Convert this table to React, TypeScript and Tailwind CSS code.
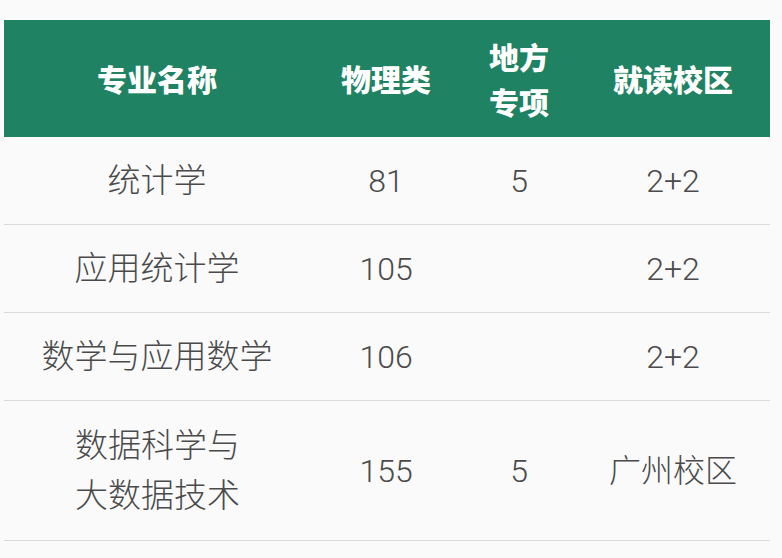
import React from "react";

const rows: { name: string[]; phys: string; local: string; campus: string; tall?: boolean }[] = [
  { name: ["统计学"], phys: "81", local: "5", campus: "2+2" },
  { name: ["应用统计学"], phys: "105", local: "", campus: "2+2" },
  { name: ["数学与应用数学"], phys: "106", local: "", campus: "2+2" },
  { name: ["数据科学与", "大数据技术"], phys: "155", local: "5", campus: "广州校区", tall: true },
];

export default function App() {
  return (
    <div className="w-[782px] h-[558px] bg-[#fafafb] pt-[20px] pl-[4px] overflow-hidden">
      <div className="w-[766px]">
        <div
          className="grid grid-cols-[306px_152px_114px_194px] h-[117px] bg-[#1f8262] text-white font-black text-[30px]"
          style={{ fontFamily: '"Noto Sans CJK SC", sans-serif' }}
        >
          <div className="flex items-center justify-center">专业名称</div>
          <div className="flex items-center justify-center">物理类</div>
          <div className="flex flex-col items-center justify-center leading-[45px]">
            <span>地方</span>
            <span>专项</span>
          </div>
          <div className="flex items-center justify-center">就读校区</div>
        </div>
        {rows.map((r, i) => (
          <div
            key={i}
            className={`grid grid-cols-[306px_152px_114px_194px] border-b border-[#d9d9dc] text-[#4a4a4a] text-[32px] font-light ${r.tall ? "h-[140px]" : "h-[88px]"}`}
            style={{ fontFamily: 'Roboto, "Noto Sans CJK SC", sans-serif' }}
          >
            <div
              className="flex flex-col justify-center leading-[50px] text-[33px]"
              style={{ alignItems: r.tall ? "flex-start" : "center", paddingLeft: r.tall ? 71 : 0 }}
            >
              {r.name.map((n) => (
                <span key={n}>{n}</span>
              ))}
            </div>
            <div className="flex items-center justify-center">{r.phys}</div>
            <div className="flex items-center justify-center">{r.local}</div>
            <div className="flex items-center justify-center">{r.campus}</div>
          </div>
        ))}
      </div>
    </div>
  );
}
